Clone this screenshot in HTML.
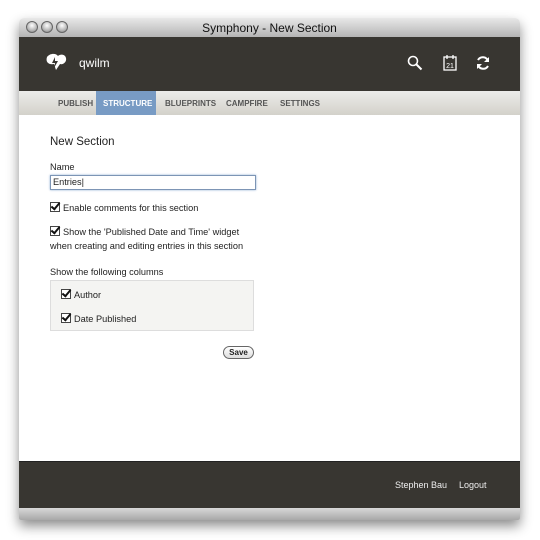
<!DOCTYPE html>
<html><head><style>
body{margin:0;width:540px;height:540px;background:#fff;position:relative;overflow:hidden;font-family:"Liberation Sans",sans-serif;}
.win{position:absolute;left:19px;top:18px;width:501px;height:502px;box-shadow:0 6px 12px rgba(0,0,0,.45);border-radius:5px 5px 2px 2px;overflow:hidden;}
.title{position:absolute;left:0;top:0;width:501px;height:19px;background:linear-gradient(#e8e8e8,#b4b4b4);text-align:center;font-size:12px;line-height:20px;color:#111;}
.dot{position:absolute;top:3px;width:12px;height:12px;border-radius:50%;background:radial-gradient(circle at 50% 35%,#fff,#aaa 70%,#777);border:1px solid #666;box-sizing:border-box}
.head{position:absolute;top:19px;left:0;width:501px;height:54px;background:#383631;}
.nav{position:absolute;top:73px;left:0;width:501px;height:24px;background:linear-gradient(#ececea,#d3d1ca);font-size:8px;font-weight:bold;color:#555;}
.nav span{position:absolute;top:8px}
.content{position:absolute;top:97px;left:0;width:501px;height:346px;background:#fff;font-size:9.2px;color:#222}
.foot{position:absolute;top:443px;left:0;width:501px;height:47px;background:#383631;border-top:1px solid #222;color:#eee;font-size:9px}
.metal{position:absolute;top:490px;left:0;width:501px;height:12px;background:linear-gradient(#d8d8d8,#a8a8a8);}
.cb{display:inline-block;width:8px;height:8px;border:1px solid #444;background:#fff;vertical-align:-1px;margin-right:3px;position:relative}
.cb:after{content:"";position:absolute;left:2px;top:-2px;width:3px;height:7px;border:solid #111;border-width:0 2px 2px 0;transform:rotate(40deg)}
</style></head><body>
<div class="win">
<div class="title">Symphony - New Section
<div class="dot" style="left:7px"></div><div class="dot" style="left:22px"></div><div class="dot" style="left:37px"></div></div>
<div class="head">
<svg style="position:absolute;left:25px;top:16px" width="24" height="18" viewBox="0 0 24 18"><path d="M3 4c3-4 9-4 11-1c2-2 7-2 8 2c1 4-3 7-6 6l-4 6l-2-6c-4 1-9-1-7-7z" fill="#fff"/><path d="M11 4l-3 6h3l-1 5l4-7h-3z" fill="#383631"/></svg>
<span style="position:absolute;left:60px;top:19px;color:#fff;font-size:12px">qwilm</span>
<svg style="position:absolute;left:388px;top:18px" width="16" height="16"><circle cx="6" cy="6" r="4.5" stroke="#fff" stroke-width="1.6" fill="none"/><path d="M9.5 9.5l5 5" stroke="#fff" stroke-width="2"/></svg>
<svg style="position:absolute;left:424px;top:17px" width="14" height="17"><rect x="1" y="3" width="12" height="13" stroke="#fff" fill="none" stroke-width="1.3"/><path d="M4 1v4M10 1v4" stroke="#fff" stroke-width="1.3"/><text x="7" y="14" font-size="7" fill="#fff" text-anchor="middle" font-family="Liberation Sans">21</text></svg>
<svg style="position:absolute;left:456px;top:18px" width="16" height="16" viewBox="0 0 16 16"><path d="M13 6A5.5 5.5 0 0 0 3 5M3 10a5.5 5.5 0 0 0 10 1" stroke="#fff" stroke-width="2" fill="none"/><path d="M14 2v5h-5zM2 14v-5h5z" fill="#fff"/></svg>
</div>
<div class="nav">
<div style="position:absolute;left:77px;top:0;width:60px;height:24px;background:#789bc4"></div>
<span style="left:39px">PUBLISH</span><span style="left:84px;color:#fff">STRUCTURE</span><span style="left:146px">BLUEPRINTS</span><span style="left:207px">CAMPFIRE</span><span style="left:261px">SETTINGS</span>
</div>
<div class="content">
<div style="position:absolute;left:31px;top:21px;font-size:11.5px">New Section</div>
<div style="position:absolute;left:31px;top:47px">Name</div>
<div style="position:absolute;left:31px;top:60px;width:202px;height:13px;border:1px solid #7d95b5;box-shadow:0 0 2px #8aaad0;line-height:13px;padding-left:2px">Entries|</div>
<div style="position:absolute;left:31px;top:87px"><span class="cb"></span>Enable comments for this section</div>
<div style="position:absolute;left:31px;top:110px;line-height:14px"><span class="cb"></span>Show the 'Published Date and Time' widget<br>when creating and editing entries in this section</div>
<div style="position:absolute;left:31px;top:152px">Show the following columns</div>
<div style="position:absolute;left:31px;top:165px;width:202px;height:49px;background:#f4f4f2;border:1px solid #ddd">
<div style="position:absolute;left:10px;top:8px"><span class="cb"></span>Author</div>
<div style="position:absolute;left:10px;top:32px"><span class="cb"></span>Date Published</div></div>
<div style="position:absolute;left:204px;top:231px;width:29px;height:11px;border:1px solid #666;border-radius:7px;background:linear-gradient(#fff,#ddd);font-weight:bold;font-size:8px;text-align:center;line-height:11px">Save</div>
</div>
<div class="foot"><span style="position:absolute;left:376px;top:18px">Stephen Bau</span><span style="position:absolute;left:440px;top:18px">Logout</span></div>
<div class="metal"></div>
</div>
</body></html>
